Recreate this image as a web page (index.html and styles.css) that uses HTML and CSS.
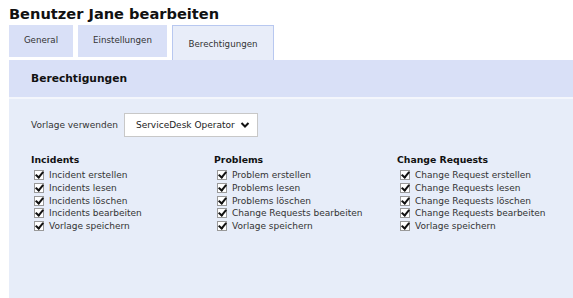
FILE: index.html
```html
<!DOCTYPE html>
<html lang="de">
<head>
    <meta charset="UTF-8">
    <title>Benutzer Jane bearbeiten</title>
    <link rel="stylesheet" href="styles.css">
</head>
<body>

    <h1 class="title">Benutzer Jane bearbeiten</h1>

    <div class="tabs">
        <div class="tab">General</div>
        <div class="tab">Einstellungen</div>
        <div class="tab active">Berechtigungen</div>
    </div>

    <div class="panel">
        <div class="panel-header">Berechtigungen</div>
        <div class="panel-body">
            <div class="template">
                <span>Vorlage verwenden</span>
                <div class="select">ServiceDesk Operator
                    <svg width="10" height="8" viewBox="0 0 10 8"><path d="M1.5 2 L5 5.5 L8.5 2" fill="none" stroke="#111" stroke-width="2"/></svg>
                </div>
            </div>

            <div class="groups">
                <div class="group">
                    <div class="group-title">Incidents</div>
                    <label class="check"><span class="box"></span>Incident erstellen</label>
                    <label class="check"><span class="box"></span>Incidents lesen</label>
                    <label class="check"><span class="box"></span>Incidents löschen</label>
                    <label class="check"><span class="box"></span>Incidents bearbeiten</label>
                    <label class="check"><span class="box"></span>Vorlage speichern</label>
                </div>
                <div class="group">
                    <div class="group-title">Problems</div>
                    <label class="check"><span class="box"></span>Problem erstellen</label>
                    <label class="check"><span class="box"></span>Problems lesen</label>
                    <label class="check"><span class="box"></span>Problems löschen</label>
                    <label class="check"><span class="box"></span>Change Requests bearbeiten</label>
                    <label class="check"><span class="box"></span>Vorlage speichern</label>
                </div>
                <div class="group">
                    <div class="group-title">Change Requests</div>
                    <label class="check"><span class="box"></span>Change Request erstellen</label>
                    <label class="check"><span class="box"></span>Change Requests lesen</label>
                    <label class="check"><span class="box"></span>Change Requests löschen</label>
                    <label class="check"><span class="box"></span>Change Requests bearbeiten</label>
                    <label class="check"><span class="box"></span>Vorlage speichern</label>
                </div>
            </div>
        </div>
    </div>

</body>
</html>
```

FILE: styles.css
```css
body {
    font-family: "DejaVu Sans", Verdana, sans-serif;
    margin: 0;
    padding: 0 0 0 9px;
    background: white;
    color: #222;
}

.title {
    font-size: 14.6px;
    font-weight: bold;
    color: #111;
    margin: 0;
    padding-top: 4px;
    height: 21px;
    line-height: 20px;
}

.tabs {
    display: flex;
    gap: 5px;
    height: 32px;
}

.tab {
    background: #d9e0f7;
    font-size: 8.7px;
    color: #333;
    display: flex;
    align-items: center;
    justify-content: center;
    padding: 0 0 2px 0;
    width: 64px;
    box-sizing: border-box;
}

.tab:nth-child(2) {
    width: 89px;
}

.tab.active {
    width: 102px;
    background: #e8edf9;
    border: 1px solid #b8c8f0;
    border-bottom: none;
    height: 35px;
    padding-top: 4px;
}

.panel {
    margin-top: 3px;
}

.panel-header {
    background: #d9e0f7;
    height: 37px;
    font-size: 10.7px;
    font-weight: bold;
    color: #111;
    padding-left: 22px;
    display: flex;
    align-items: center;
    border-bottom: 2px solid #f4f6fc;
}

.panel-body {
    background: #e7edf9;
    height: 199px;
    padding: 14px 0 0 22px;
    font-size: 9px;
}

.template {
    display: flex;
    align-items: center;
    gap: 6px;
    color: #333;
}

.select {
    background: white;
    border: 1px solid #c8c8c8;
    width: 134px;
    height: 24px;
    box-sizing: border-box;
    display: flex;
    align-items: center;
    justify-content: space-between;
    padding: 0 7px 0 11px;
    color: #222;
}

.groups {
    display: flex;
    margin-top: 17px;
}

.group {
    width: 183px;
    flex-shrink: 0;
    display: flex;
    flex-direction: column;
}

.group-title {
    font-weight: bold;
    font-size: 9.3px;
    color: #111;
    margin-bottom: 4px;
}

.check {
    display: flex;
    align-items: center;
    height: 12.7px;
    color: #333;
    padding-left: 3px;
}

.box {
    width: 10px;
    height: 10px;
    box-sizing: border-box;
    border: 1px solid #999;
    background: white;
    margin-right: 5px;
    position: relative;
}

.box::after {
    content: "";
    position: absolute;
    left: 2px;
    top: -1px;
    width: 3px;
    height: 6px;
    border: solid #111;
    border-width: 0 2px 2px 0;
    transform: rotate(40deg);
}
```
